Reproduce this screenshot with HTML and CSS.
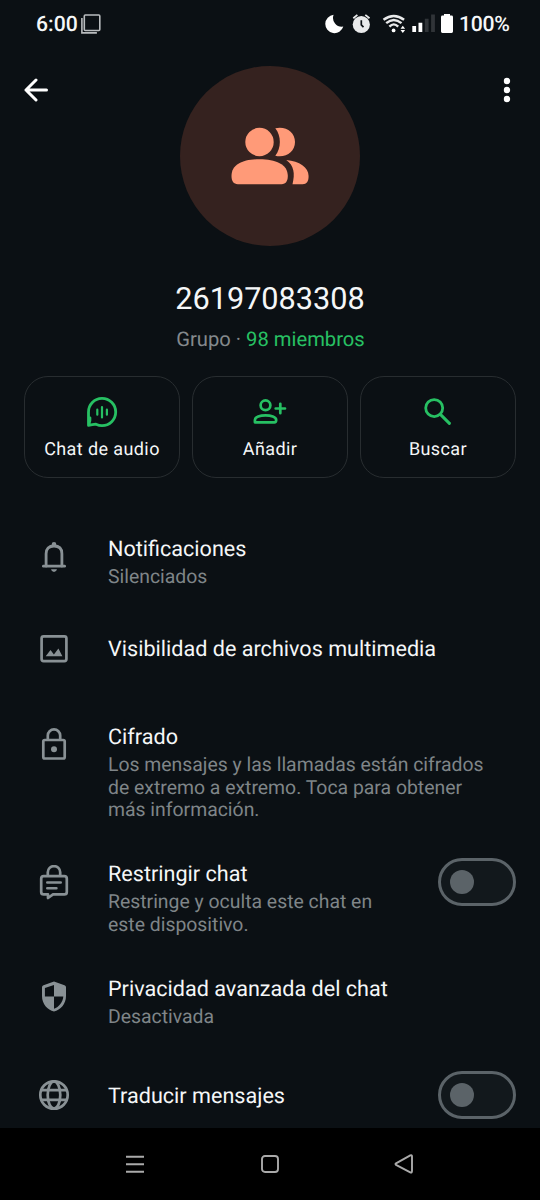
FILE: index.html
```html
<!DOCTYPE html>
<html lang="es">
<head>
<meta charset="utf-8">
<title>Info. del grupo</title>
<link rel="stylesheet" href="styles.css">
</head>
<body>
<header class="status">
  <span class="time">6:00</span>
  <svg class="copy" width="20" height="20" fill="none" stroke="#b9bcbe" stroke-width="1.6"><rect x="3.3" y="1" width="15.5" height="15.5" rx="1"/><path d="M.9 4v14.9h15"/></svg>
  <svg class="sys" width="132" height="20" viewBox="0 0 132 20" fill="#fff">
    <path d="M9.6.8A9.2 9.2 0 1 0 19.3 12.6 8.8 8.8 0 0 1 9.6.8z"/>
    <g fill="#e9eaeb"><circle cx="37.3" cy="10.5" r="8.6"/></g>
    <path d="M29.3 4.3 33.4.9M41.3.9l4.2 3.4" stroke="#e9eaeb" stroke-width="1.8"/>
    <path d="M37.3 6.3v4.6l2.2 2.2" fill="none" stroke="#0b1014" stroke-width="1.7"/>
    <g fill="none" stroke="#e9eaeb" stroke-width="2.4"><path d="M59.5 5.8Q69.8-2 80.1 5.8"/><path d="M62.2 9.2Q69.8 2.6 77.5 9.2"/><path d="M65.4 12.6Q69.8 8.2 74.2 12.6"/></g>
    <circle cx="69.6" cy="16.4" r="1.9"/><path d="m76.5 14.8 2.3-3.1 2.3 3.1zm0 1.2 2.3 3 2.3-3z"/>
    <path d="M88.3 12h3.8v6h-3.8zM94.5 8.7h3.8V18h-3.8z"/><path fill="#303438" d="M100.8 4.7h3.8V18h-3.8zM107.1.4h3.8V18h-3.8z"/>
    <path d="M120 0h6v1.5h1.6q1.4 0 1.4 1.4v14.7q0 1.4-1.4 1.4h-9.2q-1.4 0-1.4-1.4V2.9q0-1.4 1.4-1.4h1.6z"/>
  </svg>
  <span class="percent">100%</span>
</header>
<main class="content">
  <section class="hero">
    <div class="top">
      <svg class="back" width="26" height="24" fill="none" stroke="#fff" stroke-width="3" stroke-linecap="round" stroke-linejoin="round"><path d="M22.500 12H2M12 2 2 12l10 10"/></svg>
      <svg class="avatar" width="180" height="180" viewBox="180 66 180 180">
        <circle cx="270" cy="156" r="90" fill="#35221f"/>
        <g fill="#ff9a78"><circle cx="259.500" cy="142" r="14.200"/>
        <path d="M275.300 128.200C286 125.800 295 132.200 295 142S286 158.200 275.300 155.800C281.400 148 281.400 136 275.300 128.200z"/>
        <path d="M231.500 176C231.500 164 243.500 159.200 259.500 159.200S287.800 164 287.800 176C287.800 181 285.700 184.200 281.600 184.200H237.800C233.600 184.200 231.500 181 231.500 176z"/>
        <path d="M286.300 160C299.500 161.500 308.600 167 308.600 176C308.600 181.600 306.600 184.200 302.600 184.200H292.500C295.200 173.500 294 165.500 286.300 160z"/></g>
      </svg>
      <svg class="more" width="8" height="26" fill="#fff"><circle cx="4" cy="4" r="3.200"/><circle cx="4" cy="13" r="3.200"/><circle cx="4" cy="22" r="3.200"/></svg>
    </div>
    <h1 class="name">26197083308</h1>
    <p class="meta">Grupo · <span class="members">98 miembros</span></p>
    <div class="actions">
      <div class="action">
        <svg width="36" height="36" fill="none" stroke="#27c063" stroke-width="2.800" stroke-linecap="round" stroke-linejoin="round"><path d="M4.500 31.300V18.300A13.600 13.600 0 1 1 18 31.600Q15 31.600 12 30.200Q8.500 30.800 4.500 31.300Q6.500 27 6 24"/><path stroke-width="2.200" d="M13.300 15.700v5M18 13v10.400M22.900 15.700v5"/></svg>
        <span>Chat de audio</span>
      </div>
      <div class="action">
        <svg width="36" height="36" fill="none" stroke="#27c063" stroke-width="2.700" stroke-linecap="round" stroke-linejoin="round"><circle cx="13.500" cy="11.300" r="4.900"/><path d="M2.900 28.300V26C2.900 19.700 24.200 19.700 24.200 26C24.200 27.800 23.300 28.300 22.300 28.300zM28.300 9.800v9.400M23.700 14.500h9.300"/></svg>
        <span>Añadir</span>
      </div>
      <div class="action">
        <svg width="36" height="36" fill="none" stroke="#27c063" stroke-width="2.800" stroke-linecap="round"><circle cx="14.200" cy="14.100" r="8.500"/><path stroke-width="3" d="m20.600 20.600 8.800 8.800"/></svg>
        <span>Buscar</span>
      </div>
    </div>
  </section>
  <section class="list">
    <div class="row">
      <svg class="icon" width="36" height="36" fill="none" stroke="#899195" stroke-width="2.800" stroke-linecap="round"><path d="M7.400 27.200h21.200"/><path d="M10.100 27V14.700Q10.100 7 18 7T25.900 14.700V27"/><path fill="#899195" stroke="none" d="M15.700 7V5.200a2.300 2.300 0 0 1 4.600 0V7zM15 30.200h6q-.6 2.700-3 2.700t-3-2.700z"/></svg>
      <div class="text"><h2>Notificaciones</h2><p>Silenciados</p></div>
    </div>
    <div class="row single">
      <svg class="icon" width="36" height="36" fill="none" stroke="#899195" stroke-width="2.700"><rect x="5.600" y="5.300" width="24.800" height="24.800" rx="2"/><path fill="#899195" stroke="none" d="m9.700 25.300 4.800-6.200 3.400 4.300 4.500-5.900 4 7.800z"/></svg>
      <div class="text"><h2>Visibilidad de archivos multimedia</h2></div>
    </div>
  </section>
  <section class="list">
    <div class="row">
      <svg class="icon" width="36" height="36" fill="none" stroke="#899195" stroke-width="2.700"><rect x="7.300" y="13" width="21.400" height="18.500" rx="1.500"/><path d="M11.800 13V8.600a6.200 6.200 0 0 1 12.400 0V13"/><circle cx="18" cy="22.200" r="3" fill="#899195" stroke="none"/></svg>
      <div class="text"><h2>Cifrado</h2><p>Los mensajes y las llamadas están cifrados<br>de extremo a extremo. Toca para obtener<br>más información.</p></div>
    </div>
    <div class="row restrict">
      <svg class="icon" width="36" height="36" fill="none" stroke="#899195" stroke-width="2.700" stroke-linejoin="round"><path d="M7.700 11.200h20.600q2.500 0 2.500 2.500v13.200q0 2.500-2.500 2.500H17L12 33V29.400H7.700q-2.500 0-2.500-2.500V13.700q0-2.500 2.500-2.500z"/><path d="M11.800 11.200V7.300a6.200 6.200 0 0 1 12.400 0v3.900"/><path stroke-width="2.400" stroke-linecap="round" d="M11.200 17.500h13.600M11.200 23.200h9.300"/></svg>
      <div class="text"><h2>Restringir chat</h2><p>Restringe y oculta este chat en<br>este dispositivo.</p></div>
      <div class="toggle"><span class="knob"></span></div>
    </div>
    <div class="row">
      <svg class="icon" width="36" height="36"><path fill="#899195" fill-rule="evenodd" d="M18 2.500 28.500 6.200Q30 6.800 30 8.300V17C30 25 24.500 31 18 32.600C11.500 31 6 25 6 17V8.300Q6 6.800 7.500 6.200zM18 5.900 8.900 9.100V17.500H18zM18 17.500V29.800C23 28 27 23 27.300 17.500z"/></svg>
      <div class="text"><h2>Privacidad avanzada del chat</h2><p>Desactivada</p></div>
    </div>
    <div class="row single tall">
      <svg class="icon" width="36" height="36" fill="none" stroke="#899195" stroke-width="2.700"><circle cx="18" cy="18" r="13.700"/><ellipse cx="18" cy="18" rx="6.300" ry="13.700"/><path d="M5.500 13.200h25M5.500 22.800h25"/></svg>
      <div class="text"><h2>Traducir mensajes</h2></div>
      <div class="toggle"><span class="knob"></span></div>
    </div>
  </section>
</main>
<nav class="nav">
  <svg width="20" height="22" stroke="#aaa" stroke-width="1.900"><path d="M1 3.700h18M1 11.200h18M1 18.700h18"/></svg>
  <svg width="20" height="22" fill="none" stroke="#aaa" stroke-width="1.900"><rect x="2" y="3" width="16" height="16" rx="3"/></svg>
  <svg width="20" height="22" fill="none" stroke="#aaa" stroke-width="1.900" stroke-linejoin="round"><path d="M2 10.300 16.300 2.300Q18 1.600 18 3.400V18Q18 20.200 16.300 19.300L2 11.900Q.9 11.100 2 10.300z"/></svg>
</nav>
</body>
</html>
```
FILE: styles.css
```css
* { box-sizing: border-box; }
body {
  margin: 0;
  width: 540px;
  height: 1200px;
  display: flex;
  flex-direction: column;
  overflow: hidden;
  background: #0b1014;
  color: #f5f7f8;
  font-family: Roboto, sans-serif;
  text-rendering: geometricPrecision;
}
svg { display: block; flex: none; }
h1, h2, p { margin: 0; font-weight: 400; white-space: nowrap; }
.status {
  flex: none;
  display: flex;
  align-items: center;
  height: 48px;
  padding: 0 30px 0 36px;
  font-size: 21.2px;
  font-weight: 500;
}
.time { width: 45px; }
.sys { margin-left: auto; }
.percent { width: 51px; margin-left: 3px; letter-spacing: -.3px; }
.content { flex: 1; min-height: 0; overflow: hidden; }
.hero { height: 455px; padding: 18px 24px 0; }
.top { display: grid; grid-template-columns: 156px 180px 156px; }
.back { margin-top: 12px; }
.more { justify-self: end; margin: 11px 5px 0 0; }
.name {
  margin-top: 36px;
  font-size: 30.7px;
  line-height: 36px;
  text-align: center;
}
.meta {
  margin-top: 9px;
  padding-left: 1px;
  font-size: 20.2px;
  line-height: 24px;
  text-align: center;
  color: #84898c;
}
.members { color: #27c063; }
.actions {
  display: grid;
  grid-template-columns: repeat(3, 1fr);
  gap: 12px;
  margin-top: 25px;
}
.action {
  display: flex;
  flex-direction: column;
  align-items: center;
  height: 102px;
  padding-top: 17px;
  border: 1px solid #282d30;
  border-radius: 24px;
  font-size: 18px;
  line-height: 24px;
  letter-spacing: .4px;
}
.action span { margin-top: 8px; }
.list { padding-top: 12px; }
.row {
  display: flex;
  align-items: flex-start;
  padding: 19px 24px 19px 36px;
}
.icon { margin-top: 5px; }
.text { flex: 1; margin: 0 0 -1px 36px; padding-top: 1px; }
.text h2 { font-size: 21.6px; line-height: 30px; }
.text p {
  margin-top: 1px;
  font-size: 19.4px;
  line-height: 22.8px;
  color: #7f8588;
}
.restrict { padding-top: 20px; padding-bottom: 18px; }
.restrict .text { margin-bottom: 0; padding-top: 0; }
.single { align-items: center; height: 84px; padding-block: 0; }
.single .icon { margin-top: 0; }
.single .text { margin-bottom: -2px; }
.tall { height: 97px; }
.toggle {
  display: flex;
  align-items: center;
  width: 78px;
  height: 48px;
  margin-top: -2px;
  padding-left: 9px;
  border: 3px solid #5b6368;
  border-radius: 24px;
  background: #12181c;
}
.restrict .text + .toggle { margin-bottom: 0; }
.single .toggle { margin-top: 0; }
.knob { width: 24px; height: 24px; border-radius: 50%; background: #5b6368; }
.nav {
  flex: none;
  display: grid;
  grid-template-columns: repeat(3, 134.5px);
  justify-content: center;
  align-items: center;
  justify-items: center;
  height: 72px;
  padding-right: 1px;
  background: #000;
}
```
